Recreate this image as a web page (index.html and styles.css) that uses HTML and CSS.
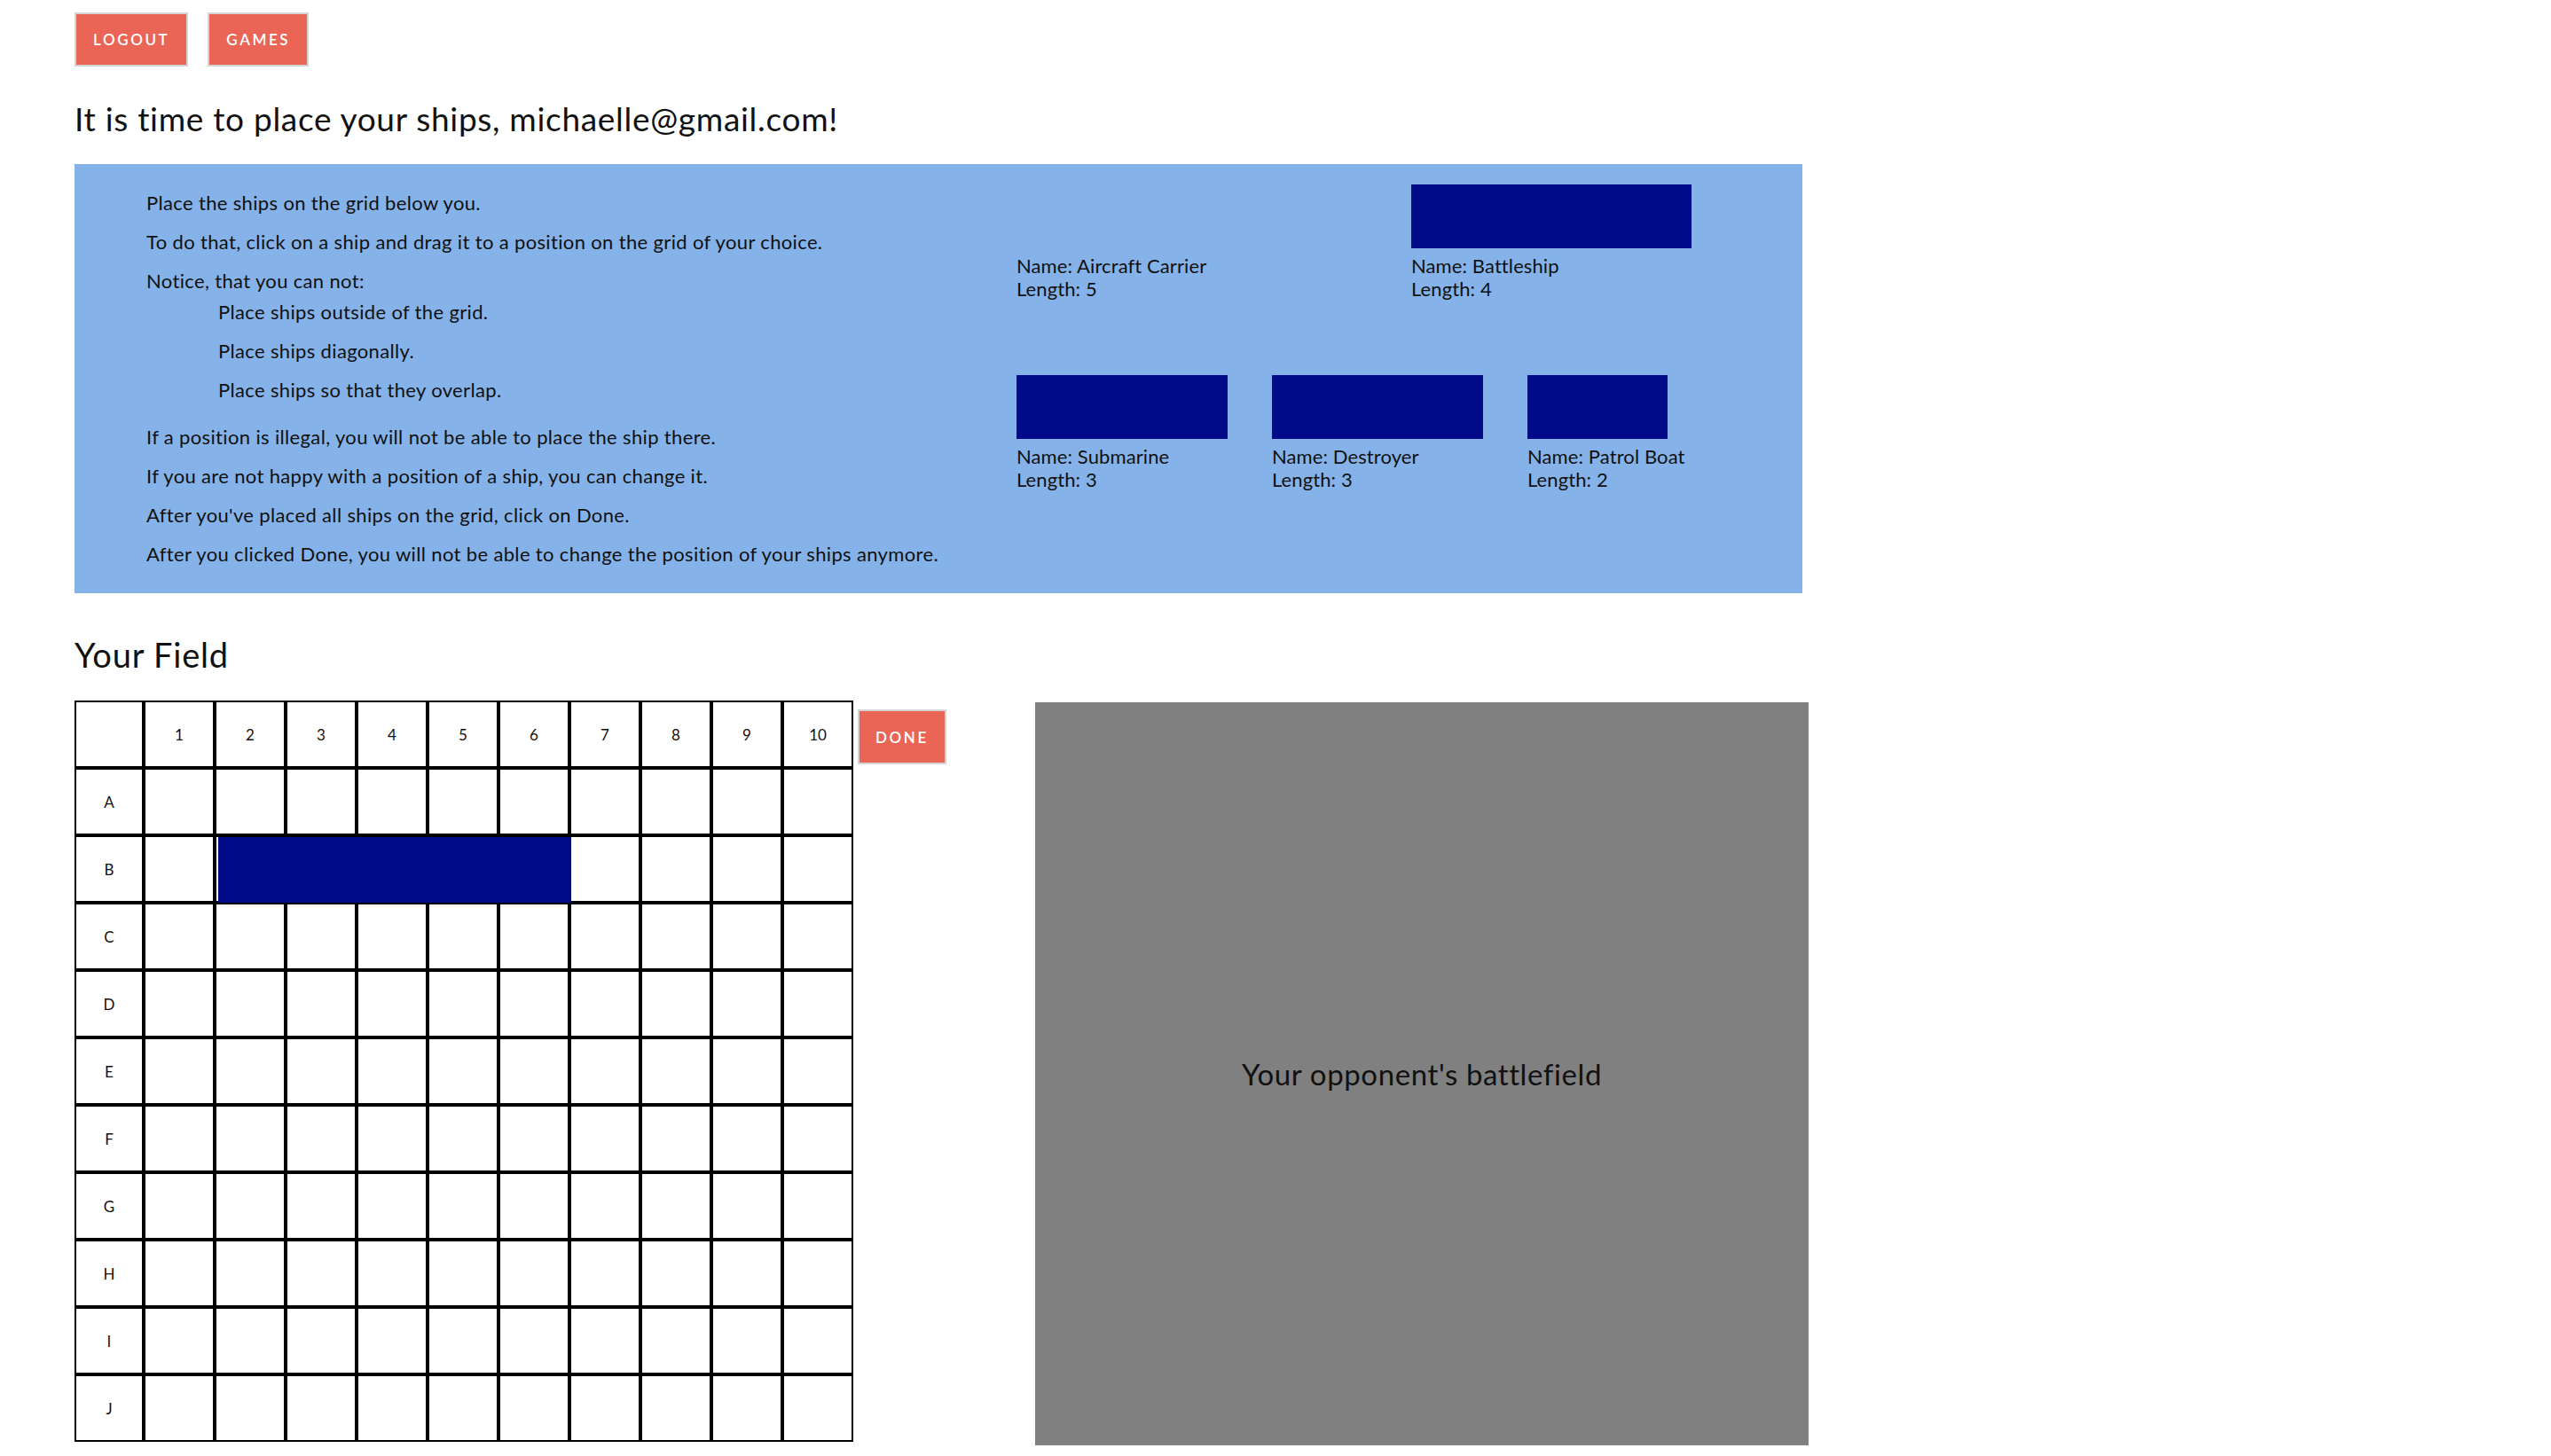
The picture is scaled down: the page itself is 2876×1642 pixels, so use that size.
FILE: index.html
```html
<!DOCTYPE html>
<html lang="en">
<head>
<meta charset="utf-8">
<title>Battleship - Place your ships</title>
<link rel="stylesheet" href="styles.css">
</head>
<body>
<div class="page">
  <nav class="nav">
    <button class="btn">Logout</button>
    <button class="btn">Games</button>
  </nav>

  <h1 class="title">It is time to place your ships, michaelle@gmail.com!</h1>

  <section class="info">
    <div class="instructions">
      <p>Place the ships on the grid below you.</p>
      <p>To do that, click on a ship and drag it to a position on the grid of your choice.</p>
      <p>Notice, that you can not:</p>
      <ul>
        <li>Place ships outside of the grid.</li>
        <li>Place ships diagonally.</li>
        <li>Place ships so that they overlap.</li>
      </ul>
      <p>If a position is illegal, you will not be able to place the ship there.</p>
      <p>If you are not happy with a position of a ship, you can change it.</p>
      <p>After you've placed all ships on the grid, click on Done.</p>
      <p>After you clicked Done, you will not be able to change the position of your ships anymore.</p>
    </div>
    <div class="ships">
      <div class="ship len-5">
        <div class="ship-slot"></div>
        <div class="ship-label">Name: Aircraft Carrier<br>Length: 5</div>
      </div>
      <div class="ship len-4">
        <div class="ship-slot"><div class="ship-body"></div></div>
        <div class="ship-label">Name: Battleship<br>Length: 4</div>
      </div>
      <div class="ship len-3">
        <div class="ship-slot"><div class="ship-body"></div></div>
        <div class="ship-label">Name: Submarine<br>Length: 3</div>
      </div>
      <div class="ship len-3">
        <div class="ship-slot"><div class="ship-body"></div></div>
        <div class="ship-label">Name: Destroyer<br>Length: 3</div>
      </div>
      <div class="ship len-2">
        <div class="ship-slot"><div class="ship-body"></div></div>
        <div class="ship-label">Name: Patrol Boat<br>Length: 2</div>
      </div>
    </div>
  </section>

  <h2 class="field-title">Your Field</h2>

  <section class="field">
    <div class="grid-wrap">
      <table class="grid">
        <tr><td></td><td>1</td><td>2</td><td>3</td><td>4</td><td>5</td><td>6</td><td>7</td><td>8</td><td>9</td><td>10</td></tr>
        <tr><td>A</td><td></td><td></td><td></td><td></td><td></td><td></td><td></td><td></td><td></td><td></td></tr>
        <tr><td>B</td><td></td><td></td><td></td><td></td><td></td><td></td><td></td><td></td><td></td><td></td></tr>
        <tr><td>C</td><td></td><td></td><td></td><td></td><td></td><td></td><td></td><td></td><td></td><td></td></tr>
        <tr><td>D</td><td></td><td></td><td></td><td></td><td></td><td></td><td></td><td></td><td></td><td></td></tr>
        <tr><td>E</td><td></td><td></td><td></td><td></td><td></td><td></td><td></td><td></td><td></td><td></td></tr>
        <tr><td>F</td><td></td><td></td><td></td><td></td><td></td><td></td><td></td><td></td><td></td><td></td></tr>
        <tr><td>G</td><td></td><td></td><td></td><td></td><td></td><td></td><td></td><td></td><td></td><td></td></tr>
        <tr><td>H</td><td></td><td></td><td></td><td></td><td></td><td></td><td></td><td></td><td></td><td></td></tr>
        <tr><td>I</td><td></td><td></td><td></td><td></td><td></td><td></td><td></td><td></td><td></td><td></td></tr>
        <tr><td>J</td><td></td><td></td><td></td><td></td><td></td><td></td><td></td><td></td><td></td><td></td></tr>
      </table>
      <div class="placed-ship"></div>
    </div>
    <button class="btn btn-done">Done</button>
    <div class="opponent">
      <span>Your opponent's battlefield</span>
    </div>
  </section>
</div>
</body>
</html>
```

FILE: styles.css
```css
* { box-sizing: border-box; }

html, body {
  margin: 0;
  padding: 0;
  background: #fff;
}

body {
  font-family: "Lato", "Noto Sans", sans-serif;
  color: #111;
}

.page {
  padding: 14px 0 0 84px;
}

.nav {
  display: flex;
  gap: 22px;
}

.btn {
  height: 61px;
  padding: 0 19px;
  background: #eb6556;
  border: 2px solid #d4d4d4;
  color: #fff;
  font-family: "Lato", "Noto Sans", sans-serif;
  font-size: 17px;
  font-weight: 600;
  letter-spacing: 2.6px;
  text-transform: uppercase;
  cursor: pointer;
}

.title {
  margin: 37px 0 29px;
  font-size: 37px;
  line-height: 44px;
  font-weight: 400;
  letter-spacing: 0.7px;
}

.info {
  display: flex;
  width: 1948px;
  background: #85b3e9;
}

.instructions {
  width: 1062px;
  flex: none;
  padding: 22px 0 22px 81px;
  font-size: 22px;
  line-height: 44px;
  letter-spacing: 0.35px;
}

.instructions p {
  margin: 0;
}

.instructions ul {
  list-style: none;
  margin: -9px 0 9px;
  padding: 0 0 0 81px;
}

.ships {
  flex: 1;
  display: flex;
  flex-wrap: wrap;
  align-content: flex-start;
  column-gap: 50px;
  row-gap: 84px;
  padding-top: 23px;
}

.ship { flex: none; }
.len-5 { width: 395px; }
.len-4 { width: 316px; }
.len-3 { width: 238px; }
.len-2 { width: 158px; }

.ship-slot {
  height: 72px;
}

.ship-body {
  height: 72px;
  background: #020b87;
}

.ship-label {
  margin-top: 7px;
  font-size: 22px;
  line-height: 26px;
  letter-spacing: 0.1px;
  white-space: nowrap;
}

.field-title {
  margin: 47px 0 30px;
  font-size: 38px;
  line-height: 44px;
  font-weight: 400;
  letter-spacing: 0.8px;
}

.field {
  display: flex;
  align-items: flex-start;
}

.grid-wrap {
  position: relative;
  flex: none;
}

.grid {
  border-collapse: separate;
  border-spacing: 0;
  table-layout: fixed;
}

.grid td {
  width: 80px;
  height: 76px;
  padding: 0;
  border: 2px solid #000;
  text-align: center;
  vertical-align: middle;
  font-size: 17px;
  color: #111;
}

.grid td:first-child {
  width: 78px;
}

.placed-ship {
  position: absolute;
  left: 162px;
  top: 154px;
  width: 398px;
  height: 74px;
  background: #020b87;
}

.btn-done {
  margin: 10px 0 0 5px;
  height: 62px;
  width: 100px;
  padding: 0;
}

.opponent {
  margin: 2px 0 0 100px;
  width: 872px;
  height: 838px;
  background: #808080;
  display: flex;
  align-items: center;
  justify-content: center;
  font-size: 33px;
  letter-spacing: 0.6px;
  color: #111;
}
```
